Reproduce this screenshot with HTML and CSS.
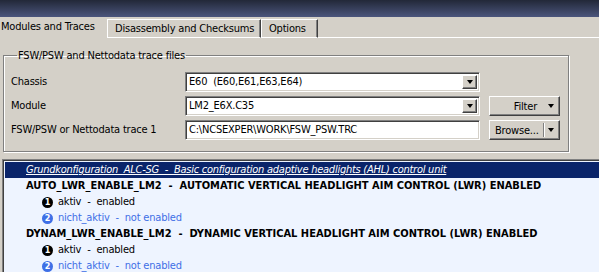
FILE: index.html
```html
<!DOCTYPE html>
<html>
<head>
<meta charset="utf-8">
<link rel="stylesheet" href="styles.css">
</head>
<body>
<div class="titlebar"></div>
<div class="tabs">
  <div class="tab active">Modules and Traces</div>
  <div class="tab t2">Disassembly and Checksums</div>
  <div class="tab t3">Options</div>
  <div class="tabfill"></div>
</div>
<div class="page">
  <fieldset class="group">
    <legend>FSW/PSW and Nettodata trace files</legend>
    <div class="grid">
      <div class="lbl">Chassis</div>
      <div class="combo"><span class="val">E60&nbsp; (E60,E61,E63,E64)</span><span class="dd"><i class="arr"></i></span></div>
      <div></div>
      <div class="lbl">Module</div>
      <div class="combo"><span class="val">LM2_E6X.C35</span><span class="dd"><i class="arr"></i></span></div>
      <div class="btn filter"><span class="btxt">Filter</span><i class="arr"></i></div>
      <div class="lbl">FSW/PSW or Nettodata trace 1</div>
      <div class="combo edit"><span class="val">C:\NCSEXPER\WORK\FSW_PSW.TRC</span></div>
      <div class="btn browse"><span class="btxt">Browse...</span><span class="sep"></span><i class="arr"></i></div>
    </div>
  </fieldset>
</div>
<div class="panel">
  <div class="hdr"><span>Grundkonfiguration&nbsp; ALC-SG&nbsp; -&nbsp; Basic configuration adaptive headlights (AHL) control unit</span></div>
  <div class="row param">AUTO_LWR_ENABLE_LM2&nbsp; -&nbsp; AUTOMATIC VERTICAL HEADLIGHT AIM CONTROL (LWR) ENABLED</div>
  <div class="row opt"><span class="num n1">1</span>aktiv&nbsp; -&nbsp; enabled</div>
  <div class="row opt blue"><span class="num n2">2</span>nicht_aktiv&nbsp; -&nbsp; not enabled</div>
  <div class="row param">DYNAM_LWR_ENABLE_LM2&nbsp; -&nbsp; DYNAMIC VERTICAL HEADLIGHT AIM CONTROL (LWR) ENABLED</div>
  <div class="row opt"><span class="num n1">1</span>aktiv&nbsp; -&nbsp; enabled</div>
  <div class="row opt blue"><span class="num n2">2</span>nicht_aktiv&nbsp; -&nbsp; not enabled</div>
</div>
</body>
</html>
```
FILE: styles.css
```css
* { box-sizing: border-box; }
html, body { margin: 0; padding: 0; }
body {
  width: 599px;
  height: 272px;
  overflow: hidden;
  background: #d4d0c8;
  font-family: "DejaVu Sans Condensed", "DejaVu Sans", sans-serif;
  font-stretch: condensed;
  font-size: 11px;
  letter-spacing: -0.2px;
  color: #000;
}
.titlebar {
  height: 17px;
  background: linear-gradient(to bottom, #222838, #4b557c);
}
.tabs {
  display: flex;
  height: 21px;
  align-items: stretch;
}
.tab {
  padding: 0 7px;
  line-height: 18px;
  white-space: nowrap;
}
.tab.active {
  width: 107px;
  padding-left: 1px;
  line-height: 19px;
}
.tab.t2, .tab.t3 {
  margin-top: 2px;
  border-left: 1px solid #fff;
  border-top: 1px solid #fff;
  border-right: 1px solid #404040;
  box-shadow: inset -1px 0 0 #808080;
  border-bottom: 1px solid #fff;
}
.tab.t2 { width: 154px; }
.tab.t3 { width: 57px; }
.tabfill { flex: 1; border-bottom: 1px solid #fff; }
.page { padding: 11px 31px 0 3px; }
.group {
  margin: 0;
  padding: 10px 8px 9px 7px;
  border: 1px solid #808080;
  box-shadow: inset 1px 1px 0 #fff, 1px 1px 0 #fff;
  height: 103px;
}
.group legend {
  padding: 0 1px;
  margin-left: 6px;
  line-height: 13px;
}
.grid {
  display: grid;
  grid-template-columns: 174px 295px 80px;
  grid-auto-rows: 20px;
  row-gap: 4px;
}
.lbl { line-height: 20px; white-space: nowrap; }
.combo {
  display: flex;
  align-items: stretch;
  background: #fff;
  border: 1px solid;
  border-color: #808080 #fff #fff #808080;
  box-shadow: inset 1px 1px 0 #404040, inset -1px -1px 0 #d4d0c8;
  padding: 2px;
}
.val { flex: 1; line-height: 14px; padding-left: 1px; white-space: nowrap; overflow: hidden; }
.dd {
  width: 15px;
  background: #d4d0c8;
  border: 1px solid;
  border-color: #fff #404040 #404040 #fff;
  box-shadow: inset -1px -1px 0 #808080;
  display: flex;
  align-items: center;
  justify-content: center;
}
.arr {
  display: block;
  width: 0; height: 0;
  border-left: 3.5px solid transparent;
  border-right: 3.5px solid transparent;
  border-top: 4px solid #000;
}
.btn {
  margin-left: 9px;
  display: flex;
  align-items: center;
  border: 1px solid;
  border-color: #fff #404040 #404040 #fff;
  box-shadow: inset -1px -1px 0 #808080;
  padding: 0 5px 0 5px;
}
.filter { justify-content: flex-end; }
.filter .btxt { margin-right: 11px; }
.browse .btxt { flex: 1; }
.sep {
  width: 1px; height: 14px;
  background: #808080;
  box-shadow: 1px 0 0 #fff;
  margin: 0 4px 0 2px;
}
.panel {
  margin: 7px 0 0 2px;
  height: 120px;
  background: #eef4ff;
  border-top: 1px solid #808080;
  border-left: 1px solid #808080;
  box-shadow: inset 1px 1px 0 #404040;
  padding: 2px 0 0 2px;
}
.hdr {
  height: 16px;
  background: #0a246a;
  color: #fff;
  font-style: italic;
  letter-spacing: -0.25px;
  line-height: 15px;
  padding-left: 21px;
}
.hdr span { text-decoration: underline; }
.row {
  height: 16px;
  line-height: 16px;
  white-space: nowrap;
  display: flex;
  align-items: center;
}
.param { font-weight: bold; padding-left: 21px; letter-spacing: 0; }
.opt { padding-left: 37px; }
.blue { color: #3e6fe6; }
.num {
  width: 11px; height: 11px;
  border-radius: 50%;
  color: #fff;
  font-weight: bold;
  font-size: 9px;
  line-height: 11px;
  text-align: center;
  letter-spacing: 0;
  margin-right: 5px;
}
.n1 { background: #000; }
.n2 { background: #3e6fe6; }
```
